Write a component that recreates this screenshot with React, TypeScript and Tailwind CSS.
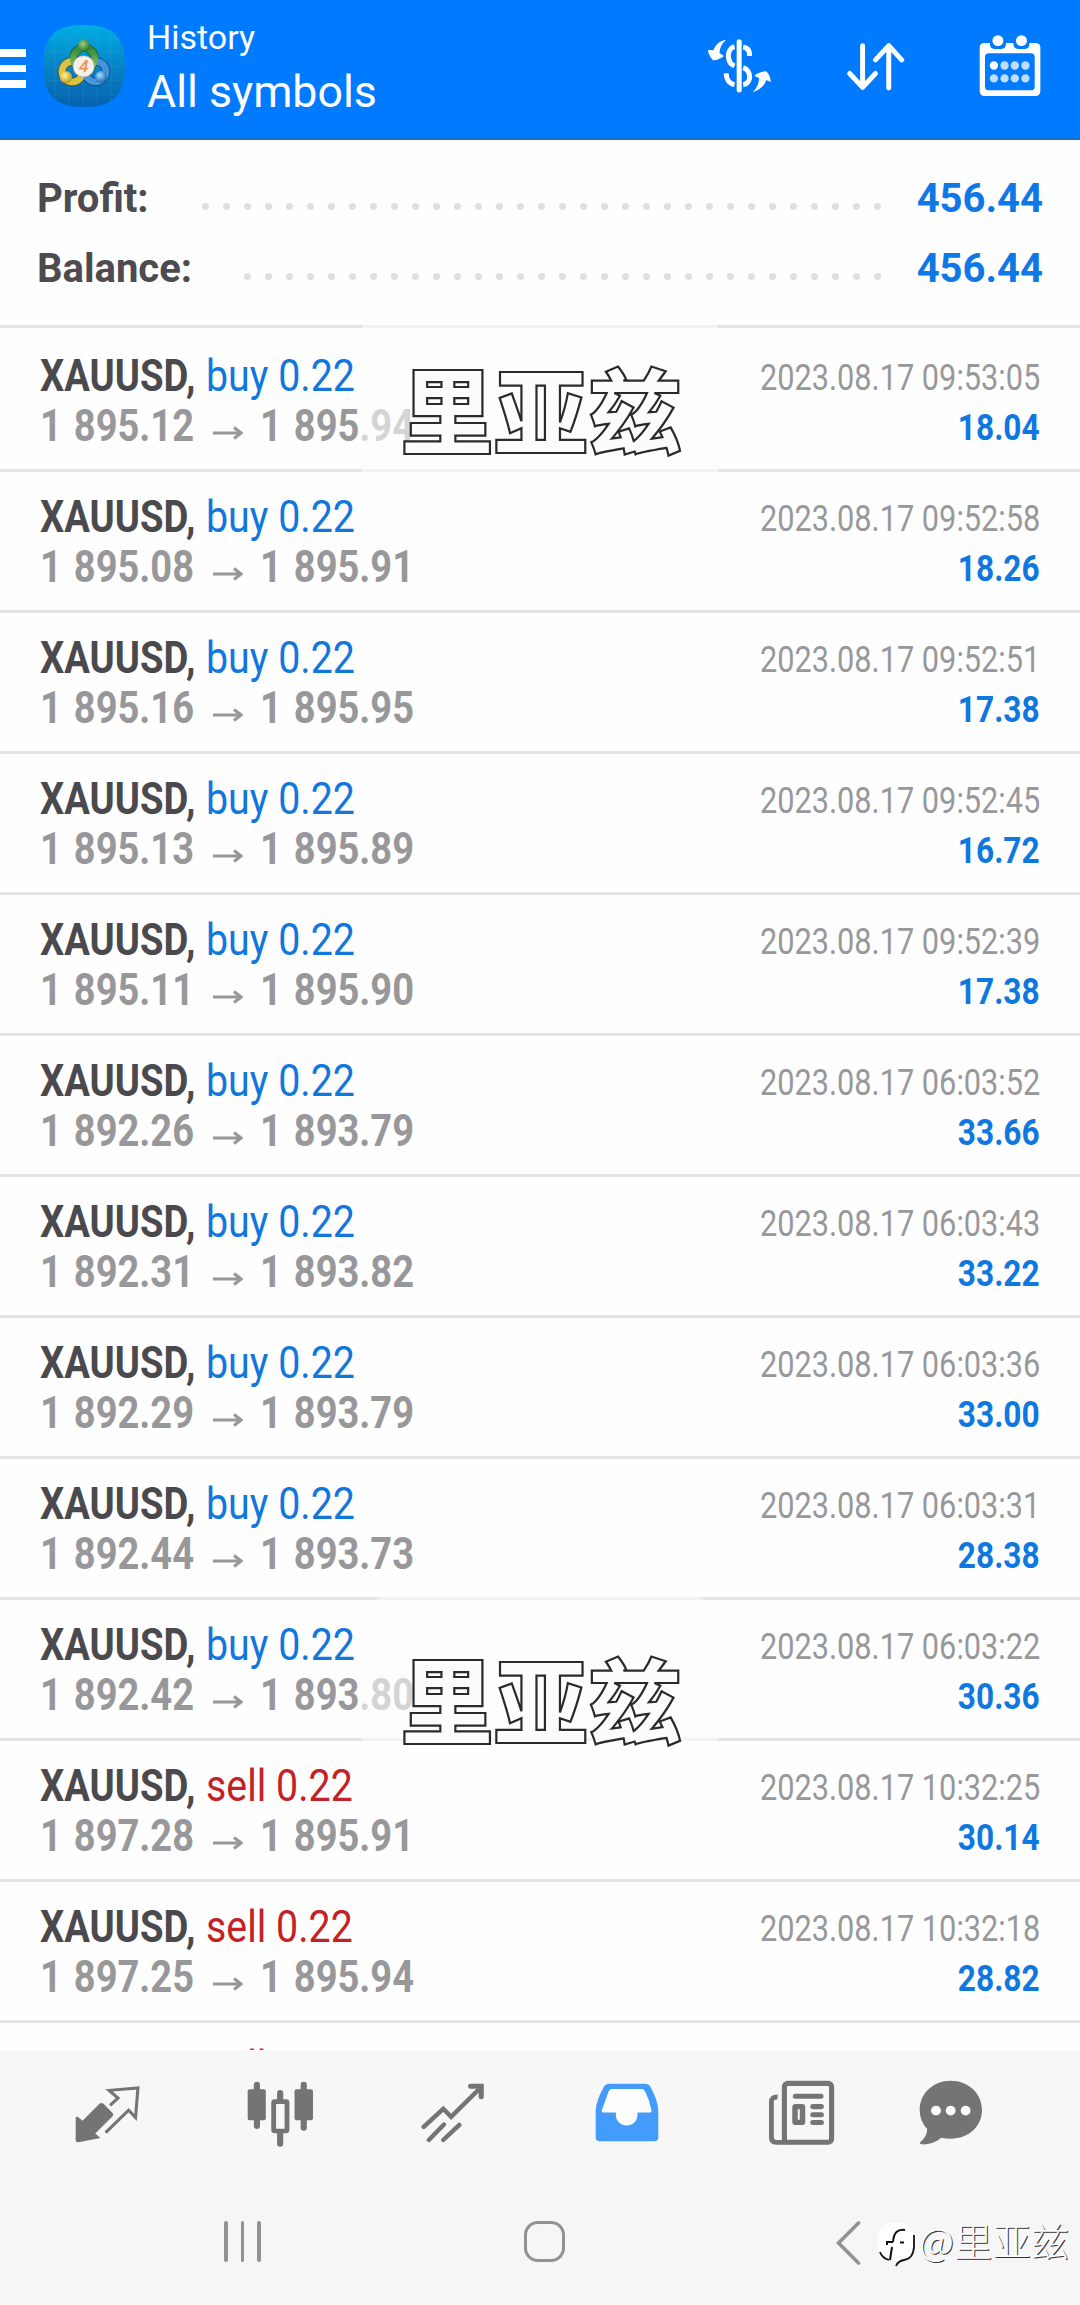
import type { ReactNode } from 'react';

type Deal = {
  side: 'buy' | 'sell';
  open: string;
  close: string;
  time: string;
  profit: string;
};

const deals: Deal[] = [
  { side: 'buy', open: '1 895.12', close: '1 895.94', time: '2023.08.17 09:53:05', profit: '18.04' },
  { side: 'buy', open: '1 895.08', close: '1 895.91', time: '2023.08.17 09:52:58', profit: '18.26' },
  { side: 'buy', open: '1 895.16', close: '1 895.95', time: '2023.08.17 09:52:51', profit: '17.38' },
  { side: 'buy', open: '1 895.13', close: '1 895.89', time: '2023.08.17 09:52:45', profit: '16.72' },
  { side: 'buy', open: '1 895.11', close: '1 895.90', time: '2023.08.17 09:52:39', profit: '17.38' },
  { side: 'buy', open: '1 892.26', close: '1 893.79', time: '2023.08.17 06:03:52', profit: '33.66' },
  { side: 'buy', open: '1 892.31', close: '1 893.82', time: '2023.08.17 06:03:43', profit: '33.22' },
  { side: 'buy', open: '1 892.29', close: '1 893.79', time: '2023.08.17 06:03:36', profit: '33.00' },
  { side: 'buy', open: '1 892.44', close: '1 893.73', time: '2023.08.17 06:03:31', profit: '28.38' },
  { side: 'buy', open: '1 892.42', close: '1 893.80', time: '2023.08.17 06:03:22', profit: '30.36' },
  { side: 'sell', open: '1 897.28', close: '1 895.91', time: '2023.08.17 10:32:25', profit: '30.14' },
  { side: 'sell', open: '1 897.25', close: '1 895.94', time: '2023.08.17 10:32:18', profit: '28.82' },
];

function AppLogo() {
  return (
    <svg viewBox="0 0 246 246" className="ml-[17px] h-[82px] w-[82px]">
      <defs>
        <linearGradient id="tile" x1="0" y1="0" x2="0" y2="1">
          <stop offset="0" stopColor="#00aee4" />
          <stop offset="0.5" stopColor="#0783c6" />
          <stop offset="1" stopColor="#0660ae" />
        </linearGradient>
        <linearGradient id="green" x1="0" y1="0" x2="0" y2="1">
          <stop offset="0" stopColor="#2f8a35" />
          <stop offset="1" stopColor="#8cc468" />
        </linearGradient>
        <radialGradient id="greenBall" cx="0.4" cy="0.35" r="0.7">
          <stop offset="0" stopColor="#9fce84" />
          <stop offset="1" stopColor="#1f6f2c" />
        </radialGradient>
        <radialGradient id="yellowBall" cx="0.4" cy="0.35" r="0.7">
          <stop offset="0" stopColor="#fff3a0" />
          <stop offset="1" stopColor="#b9930f" />
        </radialGradient>
        <radialGradient id="blueBall" cx="0.4" cy="0.35" r="0.7">
          <stop offset="0" stopColor="#a8defa" />
          <stop offset="1" stopColor="#0d5fae" />
        </radialGradient>
      </defs>
      <path d="M123 0C210 0 246 36 246 123S210 246 123 246 0 210 0 123 36 0 123 0Z" fill="url(#tile)" />
      <g stroke="#5fc4ea" strokeWidth="1.5" opacity="0.25">
        <path d="M36 20V226M78 4V242M120 2V244M162 4V242M204 16V230" />
        <path d="M16 40H230M4 82H242M2 124H244M4 166H242M16 208H230" />
      </g>
      <g fill="none">
        <circle cx="88" cy="140" r="31" stroke="#4f5a20" strokeWidth="25" />
        <circle cx="158" cy="140" r="31" stroke="#0a4b85" strokeWidth="25" />
        <circle cx="123" cy="100" r="32" stroke="#1b5f30" strokeWidth="25" />
        <circle cx="88" cy="140" r="31" stroke="#d8c347" strokeWidth="20" />
        <circle cx="158" cy="140" r="31" stroke="#4595d8" strokeWidth="20" />
        <circle cx="123" cy="100" r="32" stroke="url(#green)" strokeWidth="20" />
      </g>
      <circle cx="123" cy="62" r="18" fill="url(#greenBall)" />
      <circle cx="69" cy="157" r="18" fill="url(#yellowBall)" />
      <circle cx="174" cy="156" r="18" fill="url(#blueBall)" />
      <circle cx="122" cy="124" r="32" fill="#f5efe8" stroke="#a59c8e" strokeWidth="2" />
      <text
        x="122"
        y="142"
        textAnchor="middle"
        fontFamily="Roboto, sans-serif"
        fontStyle="italic"
        fontWeight="500"
        fontSize="52"
        fill="#ef9155"
      >
        4
      </text>
    </svg>
  );
}

function CurrencyIcon() {
  return (
    <svg viewBox="82 116 194 168" className="h-[56px] w-[65px]" fill="none">
      <path d="M178 127V272" stroke="#fff" strokeWidth="15" strokeLinecap="round" />
      <g stroke="#fff" strokeWidth="15">
        <path d="M164 142C140 148 139 190 164 200" />
        <path d="M190 143C202 145 209 154 209 166V170" />
        <path d="M190 205C216 214 216 252 190 256" />
        <path d="M139 222C139 240 148 253 164 256" />
      </g>
      <path d="M139 121C120 124 106 136 101 153L84 152C86 164 92 176 100 183C112 182 124 178 132 170L119 161C119 146 126 132 139 121Z" fill="#fff" />
      <path d="M219 279C240 272 255 258 259 242L273 248C272 236 268 224 259 216C246 217 233 221 224 229L238 237C237 252 231 267 219 279Z" fill="#fff" />
    </svg>
  );
}

function SortIcon() {
  return (
    <svg
      viewBox="497 125 178 148"
      className="ml-[74px] h-[49px] w-[59px]"
      fill="none"
      stroke="#fff"
      strokeWidth="15"
      strokeLinecap="round"
      strokeLinejoin="round"
    >
      <path d="M547 136V261M508 220L547 262L586 220" />
      <path d="M626 264V137M586 179L626 136L665 179" />
    </svg>
  );
}

function CalendarIcon() {
  return (
    <svg viewBox="898 102 187 188" className="ml-[74px] h-[63px] w-[62px]">
      <rect x="900" y="128" width="183" height="160" rx="14" fill="#fff" />
      <rect x="916" y="159" width="150" height="112" rx="12" fill="#007aff" />
      {[955, 1026].map((x) => (
        <g key={x}>
          <path d={`M${x - 24} 126V132Q${x - 24} 146 ${x - 10} 146H${x + 10}Q${x + 24} 146 ${x + 24} 132V126Z`} fill="#007aff" />
          <circle cx={x} cy="121" r="16.5" fill="#fff" />
        </g>
      ))}
      {[943, 975, 1006, 1038].map((x, i) => (
        <g key={x} fill="#fff">
          <circle cx={x} cy="196" r="12.5" opacity={i === 0 ? 1 : 0.75} />
          <circle cx={x} cy="235" r="12.5" opacity="0.75" />
        </g>
      ))}
    </svg>
  );
}

function Header() {
  return (
    <header className="flex h-[140px] shrink-0 border-b-2 border-[#1b6fc4] bg-[#007aff] text-white">
      <div className="flex w-[26px] flex-col gap-[8px] pt-[49px]">
        <span className="h-[7.5px] bg-white" />
        <span className="h-[7.5px] bg-white" />
        <span className="h-[7.5px] bg-white" />
      </div>
      <div className="pt-[25px]">
        <AppLogo />
      </div>
      <div className="ml-[22px] w-[560px] pt-[14px]">
        <div className="text-[34px] leading-[46px]">History</div>
        <div className="text-[44.7px] leading-[64px]">All symbols</div>
      </div>
      <div className="flex items-start">
        <div className="pt-[38px]">
          <CurrencyIcon />
        </div>
        <div className="pt-[42px]">
          <SortIcon />
        </div>
        <div className="pt-[34px]">
          <CalendarIcon />
        </div>
      </div>
    </header>
  );
}

function SummaryLine({ label, value, dots }: { label: string; value: string; dots: number }) {
  return (
    <div className="flex h-[70px] items-center justify-between pr-[37px] pl-[37px] text-[40px] font-bold">
      <span className="text-[#4b4b50]">{label}</span>
      <div className="flex items-center">
        <div className="mr-[36px] flex gap-[14.5px] pt-[15px]">
          {Array.from({ length: dots }, (_, i) => (
            <span key={i} className="h-[6.5px] w-[6.5px] rounded-full bg-[#e0e0e1]" />
          ))}
        </div>
        <span className="text-[#0f78e6]">{value}</span>
      </div>
    </div>
  );
}

function DealRow({ deal, className = '' }: { deal: Deal; className?: string }) {
  return (
    <div
      className={`flex h-[141px] shrink-0 justify-between border-b-3 border-[#e3e3e4] pt-[20px] pr-[40px] pl-[40px] ${className}`}
    >
      <div className="text-[44.5px] leading-[50px]">
        <div className="flex">
          <div className="w-[166px] whitespace-nowrap">
            <span className="inline-block origin-left scale-x-[0.858] font-bold text-[#4a4a4e]">XAUUSD,</span>
          </div>
          <span
            className={`inline-block origin-left scale-x-[0.884] whitespace-nowrap ${
              deal.side === 'buy' ? 'text-[#1177dd]' : 'text-[#c42126]'
            }`}
          >
            {deal.side} 0.22
          </span>
        </div>
        <div className="flex font-bold text-[#98989b]">
          <div className="w-[173px] whitespace-nowrap">
            <span className="inline-block origin-left scale-x-[0.855] [word-spacing:3px]">{deal.open}</span>
          </div>
          <svg viewBox="0 0 30 14" className="mt-[25px] h-[14px] w-[30px]" fill="none" stroke="currentColor" strokeWidth="3.2">
            <path d="M0 7H28M21 1.5L28 7L21 12.5" />
          </svg>
          <span className="ml-[17px] inline-block origin-left scale-x-[0.855] whitespace-nowrap [word-spacing:3px]">
            {deal.close}
          </span>
        </div>
      </div>
      <div className="flex flex-col items-end">
        <span className="inline-block origin-right scale-x-[0.819] pt-[1px] text-[37.5px] leading-[50px] text-[#98989b]">
          {deal.time}
        </span>
        <span className="inline-block origin-right scale-x-[0.855] pt-[1px] text-[37px] leading-[50px] font-bold text-[#0f78e0]">
          {deal.profit}
        </span>
      </div>
    </div>
  );
}

function Stamp({ className }: { className: string }) {
  return (
    <div
      className={`absolute left-[361px] flex h-[211px] w-[358px] items-center justify-center rounded-[30px] bg-[#fcfcfc]/60 pb-[7px] pl-[2px] ${className}`}
    >
      <span className="font-['Noto_Sans_CJK_SC',sans-serif] text-[94px] leading-none font-black text-[#fcfcfc] [-webkit-text-stroke:2.2px_#2a2a2a]">
        里亚兹
      </span>
    </div>
  );
}

function TabIcon({ box, className, children }: { box: string; className: string; children: ReactNode }) {
  return (
    <svg viewBox={box} preserveAspectRatio="none" className={className}>
      {children}
    </svg>
  );
}

function TabBar() {
  return (
    <nav className="flex h-[135px] shrink-0 items-start bg-[#f7f7f7] text-[#747474]">
      <TabIcon box="218 288 189 170" className="mt-[36px] ml-[75px] h-[57px] w-[65px]">
        <path
          d="M225 379L240 392L289 341Q295 336 301 341L326 367Q332 373 326 380L277 430L292 443L228 456Q220 456 220 449V382Z"
          fill="currentColor"
        />
        <path d="M320 346L343 324L317 301L401 294L394 382L374 360L307 427" fill="none" stroke="currentColor" strokeWidth="9" />
      </TabIcon>
      <TabIcon box="716 272 196 198" className="mt-[31px] ml-[107px] h-[66px] w-[67px]">
        <g fill="currentColor">
          <rect x="718" y="297" width="53" height="93" rx="6" />
          <rect x="855" y="297" width="54" height="93" rx="6" />
        </g>
        <g stroke="currentColor" strokeWidth="18" strokeLinecap="round">
          <path d="M745 283V407M882 283V412M813 308V330M813 425V460" />
        </g>
        <rect x="794" y="334" width="39" height="88" rx="3" fill="#f7f7f7" stroke="currentColor" strokeWidth="14" />
      </TabIcon>
      <TabIcon box="1223 280 187 179" className="mt-[33px] ml-[107px] h-[60px] w-[64px]">
        <g fill="none" stroke="currentColor" strokeWidth="13" strokeLinecap="round">
          <path d="M1231 411L1288 357L1311 381L1396 295" />
          <path d="M1368 290H1399V321" strokeWidth="15" />
          <path d="M1246 450L1290 404M1288 450L1335 405" />
        </g>
      </TabIcon>
      <TabIcon box="160 280 187 178" className="mt-[33px] ml-[110px] h-[59px] w-[64px]">
        <path
          fill="#439cfb"
          d="M202 282H306Q317 282 322 291Q345 335 345 365V444Q345 456 333 456H174Q162 456 162 444V365Q162 335 186 291Q191 282 202 282Z"
        />
        <path d="M211 298H295Q303 298 306 305Q319 330 325 362Q326 369 319 369H284V376C284 419 221 419 221 376V369H186Q179 369 180 362L200 305Q203 298 211 298Z" fill="#fdfdfd" />
      </TabIcon>
      <TabIcon box="662 271 196 196" className="mt-[30px] ml-[109px] h-[66px] w-[67px]">
        <g fill="none" stroke="currentColor">
          <path d="M690 322Q672 320 672 336V442Q672 456 686 456H720" strokeWidth="14" />
          <rect x="710" y="281" width="138" height="175" rx="10" strokeWidth="15" />
          <rect x="741" y="350" width="22" height="47" rx="2" strokeWidth="16" />
          <path d="M742 319H817M793 350H818M793 374H818M793 397H818" strokeWidth="15" strokeLinecap="round" />
        </g>
      </TabIcon>
      <TabIcon box="1100 271 188 195" className="mt-[30px] ml-[84px] h-[65px] w-[64px]">
        <path
          fill="currentColor"
          d="M1193 273C1246 273 1285 312 1285 361S1246 447 1193 447Q1178 447 1166 444Q1138 466 1107 464Q1100 462 1104 457Q1124 441 1124 418Q1102 395 1102 361C1102 312 1141 273 1193 273Z"
        />
        <g fill="#fff">
          <circle cx="1150" cy="363" r="14.5" />
          <circle cx="1193" cy="363" r="14.5" />
          <circle cx="1237" cy="363" r="14.5" />
        </g>
      </TabIcon>
    </nav>
  );
}

function SystemNav() {
  return (
    <div className="flex h-[120px] shrink-0 items-start bg-[#f6f6f6] pt-[36px] text-[#929292]">
      <div className="ml-[224px] flex gap-[13px]">
        <span className="h-[41px] w-[3.7px] rounded-full bg-current" />
        <span className="h-[41px] w-[3.7px] rounded-full bg-current" />
        <span className="h-[41px] w-[3.7px] rounded-full bg-current" />
      </div>
      <span className="ml-[263px] h-[41px] w-[41px] rounded-[14px] border-[3.4px] border-current" />
      <svg viewBox="0 0 26 44" className="ml-[271px] h-[44px] w-[26px]" fill="none" stroke="currentColor" strokeWidth="3.6" strokeLinecap="round">
        <path d="M22.500 2L2.500 22L22.500 42" />
      </svg>
      {/* author signature */}
      <div className="ml-[15px] flex items-start">
        <svg viewBox="0 0 40 46" className="mt-[2px] h-[46px] w-[40px]" fill="none">
          <rect x="1" y="0" width="36" height="38" rx="15" fill="#fff" />
          <path d="M37 12V24Q36 36 27 37Q21 38 19 43M3 29Q5 35 12 37" stroke="#111" strokeWidth="1.8" />
          <path d="M28 7Q17 5 16 19M16 19H10V22M23 19.500H27M15 24L13 37" stroke="#111" strokeWidth="2" />
        </svg>
        <span className="mt-[-4px] ml-[2px] font-['Noto_Sans_CJK_SC',sans-serif] text-[38.4px] leading-[44px] font-light whitespace-nowrap text-white [text-shadow:1px_1px_0_#333]">
          @里亚兹
        </span>
      </div>
    </div>
  );
}

export default function App() {
  return (
    <div className="relative flex h-[2305px] w-[1080px] flex-col overflow-hidden bg-[#fefefe] font-[Roboto,sans-serif]">
      <Header />
      <section className="h-[188px] shrink-0 border-b-3 border-[#e3e3e4] pt-[24px]">
        <SummaryLine label="Profit:" value="456.44" dots={33} />
        <SummaryLine label="Balance:" value="456.44" dots={31} />
      </section>
      <main className="flex h-[1722px] shrink-0 flex-col overflow-hidden pt-[3px]">
        {deals.map((deal) => (
          <DealRow key={deal.time} deal={deal} />
        ))}
        {/* next deal, scrolled mostly below the tab bar */}
        <DealRow className="-mt-px" deal={{ side: 'sell', open: '', close: '', time: '', profit: '' }} />
      </main>
      <TabBar />
      <SystemNav />
      <Stamp className="top-[305px]" />
      <Stamp className="top-[1595px]" />
    </div>
  );
}
